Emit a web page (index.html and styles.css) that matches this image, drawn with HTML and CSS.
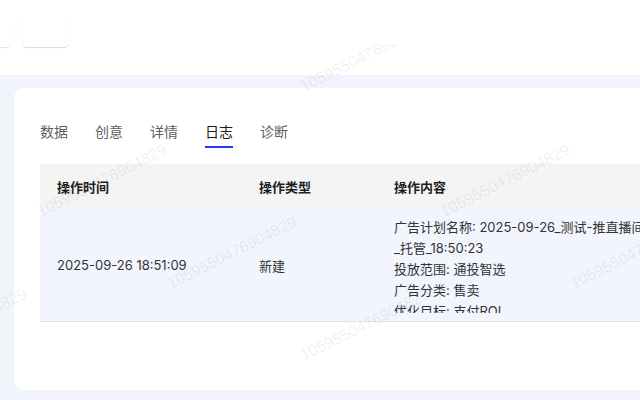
FILE: index.html
```html
<!DOCTYPE html>
<html lang="zh-CN">
<head>
<meta charset="utf-8">
<title>日志</title>
<link rel="stylesheet" href="styles.css">
</head>
<body>
<header class="topbar">
  <div class="btn btn-ghost"></div>
  <div class="btn"></div>
</header>
<main class="page">
  <section class="card">
    <nav class="tabs">
      <span class="tab">数据</span>
      <span class="tab">创意</span>
      <span class="tab">详情</span>
      <span class="tab active">日志</span>
      <span class="tab">诊断</span>
    </nav>
    <table class="log">
      <colgroup>
        <col class="c-time">
        <col class="c-type">
        <col class="c-content">
      </colgroup>
      <thead>
        <tr><th>操作时间</th><th>操作类型</th><th>操作内容</th></tr>
      </thead>
      <tbody>
        <tr>
          <td>2025-09-26 18:51:09</td>
          <td>新建</td>
          <td class="content">
            <div class="lines">
              <div class="line">广告计划名称: 2025-09-26_测试-推直播间</div>
              <div class="line">_托管_18:50:23</div>
              <div class="line">投放范围: 通投智选</div>
              <div class="line">广告分类: 售卖</div>
              <div class="line">优化目标: 支付ROI</div>
            </div>
          </td>
        </tr>
      </tbody>
    </table>
  </section>
</main>
<div class="watermarks" aria-hidden="true">
  <span class="wm" style="left:305px;top:79px">1059550476904829</span>
  <span class="wm" style="left:42px;top:204px">1059550476904829</span>
  <span class="wm" style="left:445px;top:204px">1059550476904829</span>
  <span class="wm" style="left:172px;top:276px">1059550476904829</span>
  <span class="wm" style="left:575px;top:276px">1059550476904829</span>
  <span class="wm" style="left:-98px;top:348px">1059550476904829</span>
  <span class="wm" style="left:305px;top:348px">1059550476904829</span>
</div>
</body>
</html>
```
FILE: styles.css
```css
* { box-sizing: border-box; }

html, body {
  margin: 0;
  padding: 0;
  width: 640px;
  height: 400px;
  overflow: hidden;
}

body {
  position: relative;
  background: #f2f4fc;
  font-family: Inter, "Noto Sans CJK SC", sans-serif;
  color: #333;
}

.topbar {
  height: 75px;
  background: #fff;
  display: flex;
  gap: 13px;
  padding-top: 19px;
}

.btn {
  width: 45px;
  height: 28px;
  border-radius: 4px;
  background: #fff;
  box-shadow: 0 1px 1px rgba(0, 0, 0, 0.16);
  flex: none;
}

.btn-ghost {
  width: 40px;
  margin-left: -30px;
  box-shadow: 0 1px 1px rgba(0, 0, 0, 0.1);
}

.page {
  padding: 13px 0 0 14px;
}

.card {
  width: 760px;
  height: 302px;
  background: #fff;
  border-radius: 10px;
  padding: 32px 0 0 26px;
}

.tabs {
  display: flex;
  gap: 27px;
  height: 28px;
}

.tab {
  font-family: "Noto Sans CJK SC", sans-serif;
  font-size: 14px;
  line-height: 22px;
  height: 28px;
  color: #5f5f5f;
  border-bottom: 2px solid transparent;
  padding-bottom: 4px;
}

.tab.active {
  color: #1a1a1a;
  border-bottom-color: #2439f0;
}

.log {
  margin-top: 16px;
  width: 900px;
  border-collapse: separate;
  border-spacing: 0;
  table-layout: fixed;
  font-size: 13px;
}

.c-time { width: 202px; }
.c-type { width: 135px; }

.log th {
  height: 45px;
  padding: 0 0 0 17px;
  background: #f4f4f4;
  text-align: left;
  font-family: "Noto Sans CJK SC", sans-serif;
  font-weight: 700;
  color: #1f1f1f;
  vertical-align: middle;
}

.log th:first-child { border-top-left-radius: 4px; }

.log td {
  background: #f2f5fd;
  padding: 8px 0 8px 17px;
  border-bottom: 1px solid #e3e4e8;
  vertical-align: middle;
  color: #333;
  height: 112px;
}

.lines {
  max-height: 96px;
  overflow: hidden;
  line-height: 21px;
}

.line { white-space: nowrap; }

.watermarks {
  position: absolute;
  left: 0;
  top: 44px;
  width: 640px;
  height: 356px;
  overflow: hidden;
  pointer-events: none;
}

.watermarks .wm {
  position: absolute;
  margin-top: -44px;
  font-family: "Liberation Sans", sans-serif;
  font-size: 16px;
  line-height: 16px;
  color: rgba(0, 0, 0, 0.07);
  white-space: nowrap;
  transform: rotate(-26.6deg);
  transform-origin: 0 100%;
}
```
